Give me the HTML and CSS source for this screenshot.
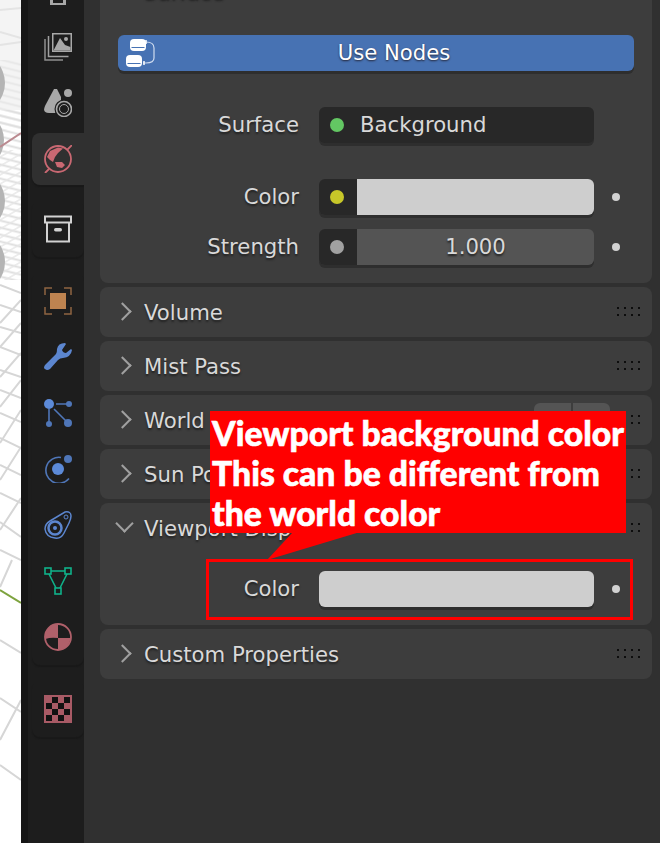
FILE: index.html
```html
<!DOCTYPE html>
<html lang="en">
<head>
  <meta charset="UTF-8">
  <title>World properties</title>
  <link rel="stylesheet" href="styles.css">
</head>
<body>

  <div class="viewport">
    <svg width="21" height="843" viewBox="0 0 21 843">
      <defs>
        <pattern id="far" width="21" height="7" patternUnits="userSpaceOnUse" patternTransform="skewY(14)">
          <path d="M0 3.500h21" stroke="#dedede" stroke-width="2"/>
        </pattern>
        <pattern id="near" width="21" height="9" patternUnits="userSpaceOnUse" patternTransform="skewY(-30)">
          <path d="M0 4h21" stroke="#e6e6e6" stroke-width="1.500"/>
        </pattern>
      </defs>
      <rect width="21" height="110" fill="#f4f4f4"/>
      <rect y="60" width="21" height="70" fill="url(#far)" opacity="0.6"/>
      <rect y="110" width="21" height="170" fill="url(#far)"/>
      <rect y="150" width="21" height="130" fill="url(#near)"/>
      <path d="M0 10 21 8M0 45 21 42M0 32 21 38" stroke="#e4e4e4" stroke-width="2"/>
      <g fill="#b4b4b4">
        <circle cx="-26" cy="83" r="31"/>
        <circle cx="-26" cy="140" r="30"/>
        <circle cx="-26" cy="201" r="31"/>
        <circle cx="-26" cy="262" r="31"/>
      </g>
      <path d="M0 147 21 133" stroke="#bb8a90" stroke-width="2"/>
      <g stroke="#d6d6d6" stroke-width="2" fill="none">
        <path d="M0 285 21 293M0 305 21 312M0 327 21 333M0 347 21 355M0 370 21 377M0 390 21 398M0 413 21 422M0 438 21 448M0 465 21 475M0 493 21 503M0 522 21 537M0 550 21 560"/>
        <path d="M0 323 21 300M0 347 21 323M0 377 21 353M0 407 21 380M0 443 21 410M0 480 21 447M0 530 21 498M0 587 12 560"/>
        <path d="M0 640 21 653M0 698 21 712M0 740 21 700M0 765 21 780"/>
      </g>
      <path d="M0 590 21 603" stroke="#7ea33f" stroke-width="2"/>
    </svg>
  </div>

  <nav class="tabs">
    <div class="tab-group first">
      <div class="tab top-tab">
        <svg class="icon" viewBox="0 0 28 28"><path d="M6 0h16v5H6zM9 0v3h10V0z" fill="#a8a8a8" fill-rule="evenodd"/></svg>
      </div>
      <div class="tab">
        <svg class="icon" viewBox="0 0 28 28" fill="none">
          <path d="M1 6v21h18" stroke="#8e8e8e" stroke-width="1.500"/>
          <path d="M4.500 3v20.500h20" stroke="#a0a0a0" stroke-width="1.500"/>
          <path d="M8 0h20v19H8z" fill="#a8a8a8"/>
          <path d="M9.500 1.500h17v16h-17z" fill="#1d1d1d"/>
          <path d="M9.500 17.500 16 5l5 7 5.500 2v3.500z" fill="#a8a8a8"/>
          <circle cx="22" cy="6" r="2" fill="#a8a8a8"/>
        </svg>
      </div>
      <div class="tab">
        <svg class="icon" viewBox="0 0 28 28" fill="none">
          <path d="M10 0 1 17q-3 7 4 7h12V8L13 0z" fill="#a8a8a8"/>
          <circle cx="20" cy="20" r="9.500" fill="#1d1d1d"/>
          <circle cx="24" cy="4" r="4" fill="#a8a8a8"/>
          <circle cx="20" cy="20" r="7.500" stroke="#a8a8a8" stroke-width="1.600"/>
          <circle cx="20" cy="20" r="4.500" stroke="#a8a8a8" stroke-width="1"/>
        </svg>
      </div>
      <div class="tab world">
        <svg class="icon" viewBox="0 0 28 28" fill="none">
          <circle cx="14" cy="14" r="13" stroke="#c96872" stroke-width="1.800"/>
          <path d="M1 28 5 24M23 5 28 0" stroke="#c96872" stroke-width="1.800"/>
          <path d="M3 12 6 6l8-3.500 5 1L14 8l-3 4-2 5-3-2zM11 17h7l3 3-3 3-5-1z" fill="#c96872"/>
        </svg>
      </div>
    </div>

    <div class="tab-group">
      <div class="tab">
        <svg class="icon" viewBox="0 0 28 28" fill="none">
          <path d="M1 1.500h26v6H1z" stroke="#d2d2d2" stroke-width="2"/>
          <path d="M3 8v18.500h22V8" stroke="#d2d2d2" stroke-width="2"/>
          <rect x="10" y="13" width="8" height="3.500" rx="1.700" fill="#d2d2d2"/>
        </svg>
      </div>
    </div>

    <div class="tab-group">
      <div class="tab">
        <svg class="icon" viewBox="0 0 28 28" fill="none">
          <rect x="6" y="6" width="16" height="16" fill="#bd8350"/>
          <path d="M1 8V1h7M20 1h7v7M27 20v7h-7M8 27H1v-7" stroke="#8f6441" stroke-width="1.500"/>
        </svg>
      </div>
      <div class="tab">
        <svg class="icon" viewBox="0 0 28 28"><path d="M21 0q-7 0-8 6 0 4-1 5L1 22q-2 3 0 4 2 2 5 0l8-9q2-2 5-2 8-1 9-8l-1-1-5 4q-3 0-4-3l4-6z" fill="#5c86cf"/></svg>
      </div>
      <div class="tab">
        <svg class="icon" viewBox="0 0 28 28" fill="none">
          <path d="M12 5h12M5 10v16M10 10l14 14" stroke="#4f76b8" stroke-width="1.600"/>
          <circle cx="5" cy="5" r="5" fill="#5c8ad8"/>
          <circle cx="25" cy="5" r="3" fill="#4f76b8"/>
          <circle cx="5" cy="25" r="3" fill="#4f76b8"/>
          <circle cx="24" cy="24" r="4" fill="#4f76b8"/>
        </svg>
      </div>
      <div class="tab">
        <svg class="icon" viewBox="0 0 28 28" fill="none">
          <path d="M17 2.500a13 13 0 1 0 8 21" stroke="#4f76b8" stroke-width="1.600"/>
          <circle cx="14" cy="14" r="6" fill="#5c8ad8"/>
          <circle cx="24" cy="4" r="4" fill="#4f76b8"/>
        </svg>
      </div>
      <div class="tab">
        <svg class="icon" viewBox="0 0 28 28" fill="none">
          <path d="M21 1q6-1 6 4 0 3-2 7l-5 10q-3 6-9 5-9-1-10-9 0-5 5-8z" stroke="#5c86cf" stroke-width="1.500"/>
          <circle cx="11" cy="17" r="6.500" stroke="#5c86cf" stroke-width="2.500"/>
          <circle cx="11" cy="17" r="2" fill="#5c86cf"/>
          <circle cx="22" cy="6" r="2" stroke="#5c86cf"/>
        </svg>
      </div>
      <div class="tab">
        <svg class="icon" viewBox="0 0 28 28" fill="none" stroke="#10b28a" stroke-width="1.600">
          <path d="M7 4h14M5 7l7 14M23 7l-7 14"/>
          <rect x="1" y="1" width="6" height="6"/>
          <rect x="21" y="1" width="6" height="6"/>
          <rect x="11" y="21" width="6" height="6"/>
        </svg>
      </div>
      <div class="tab">
        <svg class="icon" viewBox="0 0 28 28" fill="none">
          <circle cx="14" cy="14" r="13" stroke="#b0606a" stroke-width="1.800"/>
          <path d="M14 1A13 13 0 0 0 1 14q0 1 .5 2 5-2 12.500-1z" fill="#b0606a"/>
          <path d="M14 15h12.500A13 13 0 0 1 14 27z" fill="#b0606a"/>
        </svg>
      </div>
    </div>

    <div class="tab-group">
      <div class="tab">
        <svg class="icon" viewBox="0 0 28 28">
          <rect width="28" height="28" fill="#a85a65"/>
          <path fill="#111" d="M8 2h6v6H8zM20 2h6v6h-6zM2 8h6v6H2zM14 8h6v6h-6zM8 14h6v6H8zM20 14h6v6h-6zM2 20h6v6H2zM14 20h6v6h-6z"/>
        </svg>
      </div>
    </div>
  </nav>

  <main class="editor">
    <section class="panel surface-panel">
      <div class="panel-title">Surface</div>

      <button class="use-nodes">
        <svg class="nodes-icon" viewBox="0 0 30 30" fill="none">
          <rect x="4" y="1" width="16" height="12" rx="4" fill="#fff"/>
          <rect x="0" y="17" width="16" height="12" rx="4" fill="#fff"/>
          <path d="M5.500 9.500h13M1.500 25.500h13" stroke="#4772b3"/>
          <path d="M20 4q8 0 8 6v10q0 5-8 5h-3" stroke="#cfdcef" stroke-width="1.200"/>
          <path d="M20 2v4M18 23v4" stroke="#fff" stroke-width="1.500"/>
        </svg>
        Use Nodes
      </button>

      <div class="prop surface-row">
        <label>Surface</label>
        <div class="dropdown"><span class="socket green"></span>Background</div>
      </div>

      <div class="prop color-row">
        <label>Color</label>
        <div class="linked">
          <div class="socket-box"><span class="socket yellow"></span></div>
          <div class="swatch"></div>
        </div>
        <span class="dot"></span>
      </div>

      <div class="prop strength-row">
        <label>Strength</label>
        <div class="linked">
          <div class="socket-box"><span class="socket grey"></span></div>
          <div class="number">1.000</div>
        </div>
        <span class="dot"></span>
      </div>
    </section>

    <section class="panel head"><span class="chev"></span>Volume<i class="grip"></i></section>
    <section class="panel head"><span class="chev"></span>Mist Pass<i class="grip"></i></section>
    <section class="panel head"><span class="chev"></span>World Lighting<span class="presets"><b></b><b></b></span><i class="grip"></i></section>
    <section class="panel head"><span class="chev"></span>Sun Position<i class="grip"></i></section>
    <section class="panel open">
      <div class="head"><span class="chev down"></span>Viewport Display<i class="grip"></i></div>
      <div class="prop display-row">
        <label>Color</label>
        <div class="swatch solo"></div>
        <span class="dot"></span>
      </div>
    </section>
    <section class="panel head"><span class="chev"></span>Custom Properties<i class="grip"></i></section>
  </main>

  <div class="callout">Viewport background color<br>This can be different from<br>the world color</div>
  <svg class="callout-tail" width="100" height="30" viewBox="0 0 100 30"><path d="M0 28 26 0h67z" fill="#f00"/></svg>
  <div class="highlight"></div>

</body>
</html>
```

FILE: styles.css
```css
html, body {
  margin: 0;
  height: 843px;
  overflow: hidden;
}
body {
  display: flex;
  background-color: #303030;
  color: #d9d9d9;
  font-family: "DejaVu Sans", sans-serif;
  font-size: 21.2px;
}

.viewport {
  width: 21px;
  flex: none;
  background-color: #fff;
}
.viewport svg {
  display: block;
}

.tabs {
  width: 56px;
  flex: none;
  border-left: 7px solid #161616;
  background-color: #1d1d1d;
  overflow: hidden;
}
.tab-group {
  margin-left: 4px;
  margin-bottom: 16px;
  border-radius: 8px;
  box-shadow: 0 2px 1px #191919;
}
.tab-group.first {
  box-shadow: none;
}
.tab {
  height: 56px;
  padding-left: 12px;
  display: flex;
  align-items: center;
}
.tab.top-tab {
  height: 19px;
  align-items: flex-start;
}
.tab.world {
  background-color: #303030;
  border-radius: 8px 0 0 8px;
  height: 52px;
  margin-top: 2px;
  margin-bottom: 2px;
  box-shadow: 0 2px 1px #191919;
}
.icon {
  width: 28px;
  height: 28px;
  display: block;
}

.editor {
  flex: 1;
  padding: 0 8px 0 16px;
  margin-top: -24px;
}
.panel {
  background-color: #3d3d3d;
  border-radius: 8px;
  margin-bottom: 4px;
}
.head {
  height: 50px;
  display: flex;
  align-items: center;
  position: relative;
  padding-left: 44px;
  box-sizing: border-box;
  text-shadow: 0 2px 2px #222;
}
.chev {
  position: absolute;
  left: 16px;
  top: 18px;
  width: 13px;
  height: 13px;
  border-top: 2px solid #a0a0a0;
  border-right: 2px solid #a0a0a0;
  transform: rotate(45deg);
  box-sizing: border-box;
}
.chev.down {
  left: 18px;
  top: 14px;
  transform: rotate(135deg);
}
.grip {
  position: absolute;
  right: 12px;
  top: 20px;
  width: 23px;
  height: 9px;
  background-image: radial-gradient(circle at 1px 1px, #0d0d0d 1px, transparent 1.500px);
  background-size: 7px 7px;
}
.presets {
  position: absolute;
  left: 434px;
  top: 8px;
  display: flex;
  gap: 2px;
}
.presets b {
  display: block;
  width: 37px;
  height: 34px;
  background-color: #545454;
  border-radius: 6px 0 0 6px;
}
.presets b + b {
  border-radius: 0 6px 6px 0;
}

.surface-panel {
  height: 307px;
  position: relative;
  padding-top: 59px;
  box-sizing: border-box;
}
.panel-title {
  position: absolute;
  left: 44px;
  top: 3px;
  color: #d9d9d9;
  text-shadow: 0 2px 2px #222;
}
.use-nodes {
  display: flex;
  align-items: center;
  justify-content: center;
  position: relative;
  width: 516px;
  height: 36px;
  margin-left: 18px;
  padding: 0 0 2px 36px;
  background-color: #4772b3;
  border: none;
  border-radius: 6px;
  box-shadow: 0 3px 0 #2e2e2e;
  color: #fff;
  font: inherit;
  text-shadow: 0 1px 2px #223;
}
.nodes-icon {
  position: absolute;
  left: 8px;
  top: 3px;
  width: 30px;
  height: 30px;
}

.prop {
  display: flex;
  align-items: center;
  position: relative;
  height: 36px;
}
.prop label {
  width: 199px;
  text-align: right;
  text-shadow: 0 2px 2px #222;
  flex: none;
  padding-bottom: 2px;
}
.surface-row {
  margin-top: 36px;
}
.color-row {
  margin-top: 36px;
}
.strength-row {
  margin-top: 14px;
}
.dropdown {
  display: flex;
  align-items: center;
  width: 275px;
  height: 36px;
  margin-left: 20px;
  padding-bottom: 2px;
  box-sizing: border-box;
  background-color: #282828;
  border-radius: 6px;
  box-shadow: 0 3px 0 #2e2e2e;
}
.linked {
  display: flex;
  width: 275px;
  height: 36px;
  margin-left: 20px;
  border-radius: 6px;
  box-shadow: 0 3px 0 #2e2e2e;
  overflow: hidden;
}
.socket-box {
  width: 38px;
  flex: none;
  background-color: #282828;
  display: flex;
  align-items: center;
}
.socket {
  width: 14px;
  height: 14px;
  border-radius: 50%;
  margin-left: 11px;
  flex: none;
}
.dropdown .socket {
  margin-right: 16px;
  margin-top: 2px;
}
.green { background-color: #63c763; }
.yellow { background-color: #c7c729; }
.grey { background-color: #a1a1a1; }
.swatch {
  flex: 1;
  background-color: #cecece;
}
.swatch.solo {
  flex: none;
  width: 275px;
  height: 36px;
  margin-left: 20px;
  border-radius: 6px;
  box-shadow: 0 3px 0 #2e2e2e;
}
.number {
  flex: 1;
  background-color: #545454;
  text-align: center;
  line-height: 35px;
  text-shadow: 0 2px 2px #222;
}
.dot {
  width: 8px;
  height: 8px;
  border-radius: 50%;
  background-color: #d2d2d2;
  margin-left: 18px;
}
.open {
  height: 122px;
}
.display-row {
  margin-top: 18px;
}

.callout {
  position: absolute;
  left: 210px;
  top: 411px;
  width: 416px;
  height: 122px;
  background-color: #f00;
  color: #fff;
  font-family: "Lato", sans-serif;
  font-weight: 900;
  font-size: 33.7px;
  line-height: 40px;
  padding: 2px 0 0 2px;
  box-sizing: border-box;
  white-space: nowrap;
  -webkit-text-stroke: 0.6px #fff;
}
.callout-tail {
  position: absolute;
  left: 267px;
  top: 532px;
}
.highlight {
  position: absolute;
  left: 206px;
  top: 559px;
  width: 427px;
  height: 61px;
  border: 3px solid #f00;
  box-sizing: border-box;
}
```
